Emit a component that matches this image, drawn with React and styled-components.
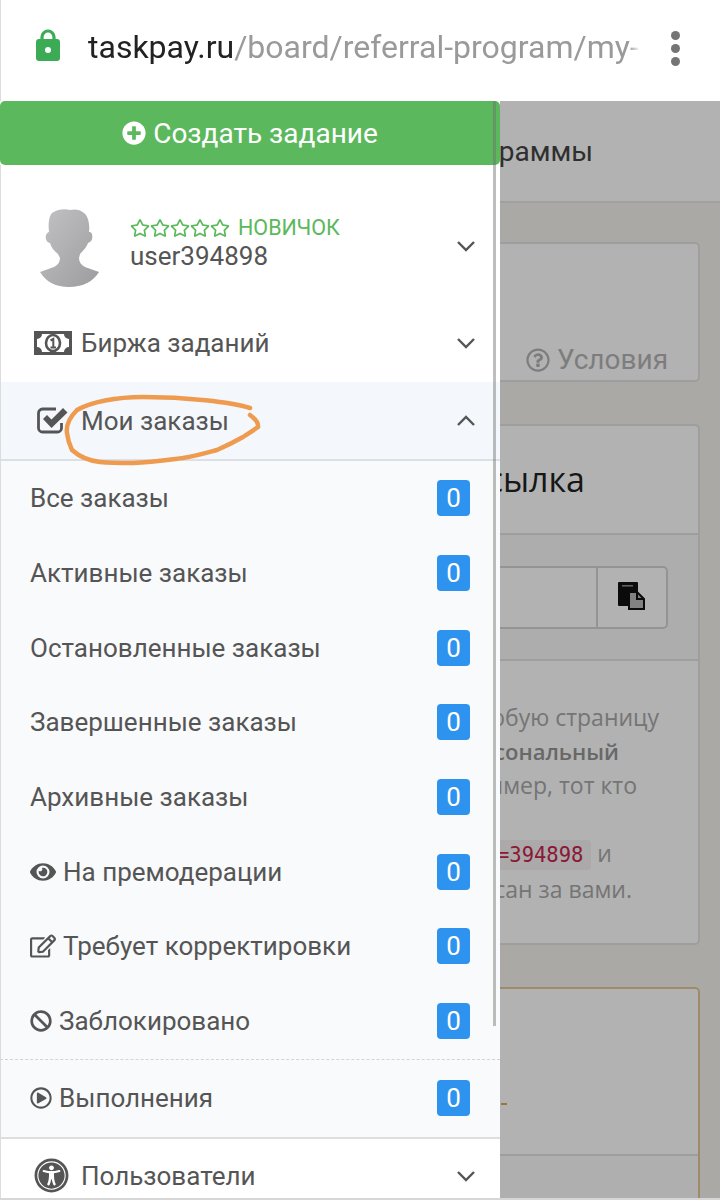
import React from 'react'
import styled, { createGlobalStyle } from 'styled-components'
import { FaBan, FaEye, FaPlusCircle, FaRegEdit, FaRegPlayCircle, FaRegQuestionCircle, FaRegStar, FaUniversalAccess } from 'react-icons/fa'

const Chevron = ({ up }) => (
    <svg width="20" height="12" viewBox="0 0 20 12" fill="none" stroke="#555" strokeWidth="2.4">
        <polyline points={up ? '2,10 10,2 18,10' : '2,2 10,10 18,2'} />
    </svg>
)

const LockIcon = () => (
    <LockBox width="24" height="32" viewBox="0 0 24 32">
        <path d="M6 11V8a6 6 0 0 1 12 0v3" fill="none" stroke="#3cab55" strokeWidth="3.2" />
        <rect x="0" y="10" width="24" height="22" rx="3" fill="#3cab55" />
        <circle cx="12" cy="21" r="3" fill="#fff" />
    </LockBox>
)

const MoneyIcon = () => (
    <svg width="38" height="24" viewBox="0 0 38 24">
        <path fillRule="evenodd" fill="#555" d="M0 0h38v24H0z M8 3h22a5 5 0 0 0 5 5v8a5 5 0 0 0-5 5H8a5 5 0 0 0-5-5V8a5 5 0 0 0 5-5z" />
        <ellipse cx="19" cy="12" rx="7" ry="8" fill="#fff" stroke="#555" strokeWidth="2.6" />
        <path d="M16.500 9.500l2.800-1.500v8 M16.500 16.500h5.500" fill="none" stroke="#555" strokeWidth="2" />
    </svg>
)

const CheckIcon = () => (
    <svg width="34" height="28" viewBox="0 1 34 28">
        <path d="M27.500 17v5a4 4 0 0 1-4 4H8.500a4 4 0 0 1-4-4V7a4 4 0 0 1 4-4H22" fill="none" stroke="#555" strokeWidth="2.800" />
        <path d="M9 13l4-4 4.500 4.500L29 2l4.500 4.500L17.500 22z" fill="#555" />
    </svg>
)

const PasteIcon = () => (
    <svg width="28" height="28" viewBox="0 0 28 28">
        <rect x="0" y="0" width="20" height="24" rx="1" fill="#111" />
        <rect x="4" y="3" width="11" height="1.600" fill="#888" />
        <path d="M11 10h8l7 7v10H11z" fill="#bbb" stroke="#111" strokeWidth="2" />
        <path d="M19 10v7h7" fill="none" stroke="#111" strokeWidth="2" />
    </svg>
)

const Avatar = () => (
    <svg width="63" height="80" viewBox="0 0 63 80">
        <defs>
            <linearGradient id="avatarShade" x1="0" y1="0" x2="1" y2="1">
                <stop offset="0" stopColor="#c2c2c4" />
                <stop offset="1" stopColor="#9c9c9f" />
            </linearGradient>
        </defs>
        <path fill="url(#avatarShade)" d="M22 50C22 54 20 57 16 59L2 64C8 74 18 79 31 79C44 79 55 74 61 64L47 59C43 57 41 54 41 50L42 46C46 42 49 38 50 35C54 34 55 30 54 26C53 24 52 24 51 24C52 16 50 8 46 5C42 1 36 1 32 2C26 0 18 2 14 5C11 8 10 16 11 24C10 24 9 25 8 27C7 31 9 35 12 35C13 39 16 43 20 46Z" />
    </svg>
)

const subItems = [
    { label: 'Все заказы' },
    { label: 'Активные заказы' },
    { label: 'Остановленные заказы' },
    { label: 'Завершенные заказы' },
    { label: 'Архивные заказы' },
    { label: 'На премодерации', icon: <FaEye size={26} /> },
    { label: 'Требует корректировки', icon: <FaRegEdit size={26} /> },
    { label: 'Заблокировано', icon: <FaBan size={22} /> },
]

const App = () => (
    <Frame>
        <GlobalStyle />
        <AddressBar>
            <LockIcon />
            <Url><b>taskpay.ru</b>/board/referral-program/my-link</Url>
            <Kebab><i /><i /><i /></Kebab>
        </AddressBar>
        <Stage>
            <Page>
                <PageHeader>программы</PageHeader>
                <Content>
                    <Card $h={140}>
                        <Terms><FaRegQuestionCircle size={24} /> Условия</Terms>
                    </Card>
                    <Card $h={521}>
                        <CardTitle>ссылка</CardTitle>
                        <LinkSection>
                            <InputGroup>
                                <CopyButton><PasteIcon /></CopyButton>
                            </InputGroup>
                        </LinkSection>
                        <CardText>
                            <Line $end={39}>любую страницу</Line>
                            <Line $end={79}><strong>сональный</strong></Line>
                            <Line $end={61}>пример, тот кто</Line>
                            <Line $end={61}>&nbsp;</Line>
                            <Line $end={86}><Code>=394898</Code> и</Line>
                            <Line $end={66}>сан за вами.</Line>
                        </CardText>
                    </Card>
                    <Card $warn $h={300}>
                        <Dash />
                        <WarnRow />
                    </Card>
                </Content>
            </Page>
            <Dim />
            <Sidebar>
                <CreateButton><FaPlusCircle size={24} /> Создать задание</CreateButton>
                <Scrollbar />
                <UserRow>
                    <Avatar />
                    <UserInfo>
                        <Rank>
                            <Stars>{[1, 2, 3, 4, 5].map(n => <FaRegStar key={n} size={20} />)}</Stars>
                            новичок
                        </Rank>
                        <UserName>user394898</UserName>
                    </UserInfo>
                    <Chevron />
                </UserRow>
                <MenuRow>
                    <MenuIcon><MoneyIcon /></MenuIcon>
                    <MenuLabel>Биржа заданий</MenuLabel>
                    <Chevron />
                </MenuRow>
                <MenuRow $open>
                    <MenuIcon><CheckIcon /></MenuIcon>
                    <MenuLabel>Мои заказы</MenuLabel>
                    <Chevron up />
                    <Scribble width="194" height="68" viewBox="0 0 194 68" fill="none" stroke="#ee9b50" strokeWidth="4.5" strokeLinecap="round">
                        <path d="M184 12C165 6 120 1 77 1C50 1 25 6 11 14C3 22 0 30 1 37C2 46 4 50 6 54C15 62 25 65 34 66C45 67 55 67 67 67C85 66 100 64 117 62C130 60 140 57 151 54C160 50 170 45 177 41C183 37 188 34 192 31C193 26 188 22 184 19" />
                    </Scribble>
                </MenuRow>
                <SubList>
                    {subItems.map(item => (
                        <SubItem key={item.label}>
                            <SubLabel>{item.icon}{item.label}</SubLabel>
                            <Badge>0</Badge>
                        </SubItem>
                    ))}
                    <SubItem $runs>
                        <SubLabel><FaRegPlayCircle size={22} />Выполнения</SubLabel>
                        <Badge>0</Badge>
                    </SubItem>
                </SubList>
                <MenuRow $last>
                    <MenuIcon><FaUniversalAccess size={35} /></MenuIcon>
                    <MenuLabel>Пользователи</MenuLabel>
                    <Chevron />
                </MenuRow>
            </Sidebar>
        </Stage>
    </Frame>
)

export default App


//css
const GlobalStyle = createGlobalStyle`
    html, body {
        margin: 0;
        background: #fff;
    }
    * {
        box-sizing: border-box;
    }
`

const Frame = styled.div`
    width: 720px;
    height: 1200px;
    overflow: hidden;
    display: flex;
    flex-direction: column;
    border-bottom: 2px solid #d6d6d6;
    font-family: Roboto, sans-serif;
`

const AddressBar = styled.header`
    height: 101px;
    flex: none;
    display: flex;
    align-items: center;
    padding: 0 37px 8px 36px;
    background: #fff;
    box-shadow: inset 1px 0 #dcdcdc;
`

const LockBox = styled.svg`
    margin-top: -4px;
`

const Url = styled.div`
    width: 552px;
    margin-left: 28px;
    overflow: hidden;
    white-space: nowrap;
    font-size: 32px;
    color: #9a9a9a;
    -webkit-mask-image: linear-gradient(to right, #000 98%, transparent);
    mask-image: linear-gradient(to right, #000 98%, transparent);

    b {
        font-weight: 400;
        color: #222;
    }
`

const Kebab = styled.div`
    display: flex;
    flex-direction: column;
    gap: 4px;
    margin-left: 31px;
    margin-top: 4px;

    i {
        display: block;
        width: 9px;
        height: 9px;
        border-radius: 50%;
        background: #757575;
    }
`

const Stage = styled.div`
    position: relative;
    flex: 1;
    min-height: 0;
    overflow: hidden;
`

const Page = styled.main`
    height: 100%;
    background: #f4f2ee;
    font-family: "Open Sans", sans-serif;
`

const PageHeader = styled.div`
    height: 102px;
    padding: 0 127px 0 0;
    display: flex;
    align-items: center;
    justify-content: flex-end;
    white-space: nowrap;
    background: #fff;
    border-bottom: 2px solid #e6e6e6;
    font-family: Roboto, sans-serif;
    font-size: 28px;
    color: #444;
`

const Content = styled.div`
    display: flex;
    flex-direction: column;
    gap: 42px;
    padding: 39px 20px 0 0;
`

const Card = styled.section`
    position: relative;
    height: ${p => p.$h}px;
    flex: none;
    display: flex;
    flex-direction: column;
    background: #fff;
    border: 2px solid ${p => (p.$warn ? '#e5c896' : '#e2e2e2')};
    border-radius: 5px;
`

const Terms = styled.div`
    margin-top: auto;
    padding: 0 30px 4px 0;
    display: flex;
    align-items: center;
    justify-content: flex-end;
    gap: 7px;
    font-family: Roboto, sans-serif;
    font-size: 28px;
    color: #b4b4b4;
`

const CardTitle = styled.h2`
    height: 109px;
    margin: 0;
    padding: 0 113px 2px 0;
    display: flex;
    align-items: center;
    justify-content: flex-end;
    white-space: nowrap;
    font-size: 34px;
    font-weight: 400;
    color: #222;
    border-bottom: 2px solid #e2e2e2;
`

const LinkSection = styled.div`
    height: 126px;
    padding: 31px 30px 0 0;
    background: #f8f8f8;
    border-bottom: 2px solid #e2e2e2;
`

const InputGroup = styled.div`
    height: 63px;
    display: flex;
    justify-content: flex-end;
    background: #fff;
    border: 2px solid #d4d4d4;
    border-radius: 5px;
`

const CopyButton = styled.div`
    width: 70px;
    padding-bottom: 4px;
    display: flex;
    align-items: center;
    justify-content: center;
    border-left: 2px solid #d4d4d4;
`

const CardText = styled.div`
    padding-top: 39px;
    font-size: 23px;
    line-height: 34px;
    color: #a8a8a8;
`

const Line = styled.div`
    padding-right: ${p => p.$end}px;
    text-align: right;
    white-space: nowrap;

    strong {
        font-size: 22px;
        font-weight: 600;
        color: #959595;
    }
`

const Code = styled.code`
    padding: 3px 8px;
    border-radius: 4px;
    background: #f5f2f2;
    font-family: "DejaVu Sans Mono", monospace;
    font-size: 20.500px;
    color: #c7254e;
`

const Dash = styled.div`
    position: absolute;
    left: 499px;
    top: 114px;
    width: 6px;
    height: 2px;
    background: #e0a94a;
`

const WarnRow = styled.div`
    margin-top: 165px;
    flex: 1;
    background: #fbfbfb;
    border-top: 2px solid #e2e2e2;
`

const Dim = styled.div`
    position: absolute;
    inset: 0;
    background: rgba(0, 0, 0, 0.3);
`

const Sidebar = styled.aside`
    position: absolute;
    top: 0;
    bottom: 0;
    left: 0;
    width: 500px;
    background: #fff;
    display: flex;
    flex-direction: column;
    color: #555;

    &::after {
        content: '';
        position: absolute;
        top: 64px;
        bottom: 0;
        left: 0;
        width: 1px;
        background: #dcdcdc;
    }
`

const Scrollbar = styled.div`
    position: absolute;
    z-index: 2;
    top: 0;
    left: 493px;
    width: 3px;
    height: 925px;
    background: rgba(110, 110, 110, 0.45);
`

const CreateButton = styled.div`
    height: 64px;
    flex: none;
    display: flex;
    align-items: center;
    justify-content: center;
    gap: 7px;
    border-radius: 5px;
    background: #5cb85c;
    font-size: 28px;
    color: #fff;
`

const UserRow = styled.div`
    height: 135px;
    flex: none;
    display: flex;
    align-items: center;
    padding: 30px 24px 0 38px;

    > svg:last-child {
        margin-top: -3px;
    }
`

const UserInfo = styled.div`
    flex: 1;
    margin-left: 29px;
    margin-top: -9px;
`

const Rank = styled.div`
    display: flex;
    align-items: center;
    gap: 8px;
    font-size: 21.500px;
    line-height: 27px;
    text-transform: uppercase;
    color: #5cb85c;
`

const Stars = styled.span`
    display: flex;
`

const UserName = styled.div`
    font-size: 26px;
    line-height: 31px;
    color: #555;
`

const MenuRow = styled.div`
    position: relative;
    height: ${p => (p.$open ? 79 : p.$last ? 74 : 82)}px;
    flex: none;
    display: flex;
    align-items: center;
    padding: 0 24px 0 0;
    background: ${p => (p.$open ? '#f4f7fb' : '#fff')};
    border-bottom: ${p => (p.$open ? '2px solid #dcdfe3' : '0')};
    padding-top: ${p => (p.$open || p.$last ? 0 : 4)}px;
`

const MenuIcon = styled.span`
    width: 81px;
    padding-left: 34px;
    flex: none;
    display: flex;
    align-items: center;
`

const MenuLabel = styled.span`
    flex: 1;
    font-size: 26px;
`

const Scribble = styled.svg`
    position: absolute;
    left: 66px;
    top: 14px;
    overflow: visible;
`

const SubList = styled.ul`
    flex: none;
    margin: 0;
    padding: 0;
    list-style: none;
    background: #f9fafc;
    border-bottom: 2px solid #dedede;
`

const SubItem = styled.li`
    height: ${p => (p.$runs ? 78 : 74.7)}px;
    display: flex;
    align-items: center;
    justify-content: space-between;
    padding: 0 30px ${p => (p.$runs ? 1 : 0)}px;
    border-top: ${p => (p.$runs ? '1px dashed #d4d4d4' : '0')};
`

const SubLabel = styled.span`
    display: flex;
    align-items: center;
    gap: 7px;
    font-size: 26px;
`

const Badge = styled.span`
    width: 33px;
    height: 36px;
    display: flex;
    align-items: center;
    justify-content: center;
    border-radius: 4px;
    background: #2e93ee;
    font-size: 26px;
    color: #fff;
`
